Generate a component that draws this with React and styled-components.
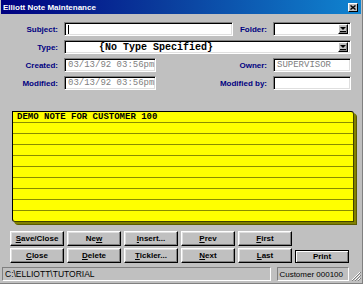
import React from 'react'
import styled, { createGlobalStyle } from 'styled-components'

const GlobalStyle = createGlobalStyle`
  html, body {
    margin: 0;
    padding: 0;
    background: #c0c0c0;
  }
  body {
    font-family: "Liberation Sans", Arial, sans-serif;
  }
`

const Window = styled.div`
  width: 363px;
  height: 284px;
  box-sizing: border-box;
  background: #c0c0c0;
  padding: 0 1px 2px 1px;
  border-right: 1px solid #808080;
  border-bottom: 1px solid #808080;
  display: flex;
  flex-direction: column;
`

const TitleBar = styled.div`
  height: 14px;
  display: flex;
  align-items: center;
  justify-content: space-between;
  padding: 0 3px 0 2px;
  background: linear-gradient(to right, #000080 0%, #0a3c9c 45%, #1084d0 100%);
  color: #fff;
  font-weight: bold;
  font-size: 8px;
`

const CloseBox = styled.div`
  width: 10px;
  height: 9px;
  box-sizing: border-box;
  background: #c0c0c0;
  border: 1px solid;
  border-color: #fff #000 #000 #fff;
  display: flex;
  align-items: center;
  justify-content: center;
`

const Body = styled.div`
  flex: 1;
  display: flex;
  flex-direction: column;
  align-items: flex-start;
  padding: 8px 9px 0 3px;
`

const Form = styled.div`
  width: 347px;
  display: grid;
  grid-template-columns: 54px 169px minmax(0, 1fr) 78px;
  grid-auto-rows: 14px;
  column-gap: 6px;
  row-gap: 4px;
`

const Label = styled.div`
  justify-self: end;
  align-self: center;
  white-space: nowrap;
  color: #000080;
  font-weight: bold;
  font-size: 8px;
`

const Field = styled.div`
  grid-column: ${(p) => p.$span || 'auto'};
  width: ${(p) => (p.$w ? `${p.$w}px` : 'auto')};
  min-width: 0;
  box-sizing: border-box;
  background: #fff;
  border: 1px solid;
  border-color: #808080 #fff #fff #808080;
  box-shadow: inset 1px 1px 0 #000, inset -1px -1px 0 #dfdfdf;
  display: flex;
  align-items: center;
  padding: 0 2px 0 3px;
  font-family: "Liberation Mono", "Courier New", monospace;
  font-size: ${(p) => (p.$big ? '10px' : '9px')};
  font-weight: ${(p) => (p.$bold ? 'bold' : 'normal')};
  color: ${(p) => (p.$disabled ? '#808080' : '#000')};
  white-space: nowrap;
  overflow: hidden;
`

const Caret = styled.span`
  width: 1px;
  height: 9px;
  background: #000;
`

const SelectText = styled.span`
  flex: 1;
  padding-left: 31px;
`

const DropButton = styled.div`
  width: 10px;
  height: 10px;
  margin-left: auto;
  box-sizing: border-box;
  background: #c0c0c0;
  border: 1px solid;
  border-color: #fff #000 #000 #fff;
  box-shadow: inset -1px -1px 0 #808080;
  display: flex;
  align-items: center;
  justify-content: center;
  flex-shrink: 0;
`

const Note = styled.div`
  margin: 21px 0 0 8px;
  width: 342px;
  height: 111px;
  box-sizing: border-box;
  border: 1px solid #000;
  border-right-color: #404000;
  border-bottom-color: #404000;
  border-radius: 0 3px 0 3px;
  box-shadow: 2px 2px 0 #808000, 3px 3px 0 #5a5a00;
  background: repeating-linear-gradient(
    to bottom,
    #ffff00 0px,
    #ffff00 10px,
    #8a8c00 10px,
    #8a8c00 11px
  );
`

const NoteLine = styled.div`
  height: 10px;
  line-height: 11px;
  padding-left: 4px;
  font-family: "Liberation Mono", "Courier New", monospace;
  font-weight: bold;
  font-size: 9px;
  color: #000;
`

const Buttons = styled.div`
  margin: 9px 0 0 6px;
  display: grid;
  grid-template-columns: repeat(6, 54px);
  grid-auto-rows: 15px;
  column-gap: 3px;
  row-gap: 2px;
`

const Button = styled.div`
  grid-column: ${(p) => p.$col || 'auto'};
  grid-row: ${(p) => p.$row || 'auto'};
  box-sizing: border-box;
  height: ${(p) => (p.$default ? '13px' : '15px')};
  align-self: end;
  background: #c0c0c0;
  border: 1px solid;
  border-color: ${(p) => (p.$default ? '#000' : '#fff #000 #000 #fff')};
  box-shadow: ${(p) =>
    p.$default
      ? 'inset 1px 1px 0 #fff, inset -1px -1px 0 #808080'
      : 'inset -1px -1px 0 #808080, inset 1px 1px 0 #dfdfdf'};
  display: flex;
  align-items: center;
  justify-content: center;
  font-weight: bold;
  font-size: 8px;
  color: #000;
  white-space: nowrap;
`

const StatusBar = styled.div`
  margin-top: 3px;
  height: 14px;
  display: flex;
  gap: 6px;
  padding-left: 1px;
  align-items: stretch;
`

const Panel = styled.div`
  width: ${(p) => p.$w}px;
  box-sizing: border-box;
  border: 1px solid;
  border-color: #808080 #fff #fff #808080;
  display: flex;
  align-items: center;
  padding-left: ${(p) => (p.$tight ? '1px' : '2px')};
  font-size: ${(p) => (p.$tight ? '8px' : '8.5px')};
  color: #000;
  white-space: nowrap;
  overflow: hidden;
`

const Grip = styled.div`
  flex: 1;
  display: flex;
  align-items: flex-end;
  justify-content: flex-end;
  margin-left: -5px;
`

function Arrow() {
  return (
    <svg width="6" height="6" viewBox="0 0 6 6">
      <path d="M0 1h6L3 4z" fill="#000" />
      <rect x="0" y="5" width="6" height="1" fill="#000" />
    </svg>
  )
}

const buttons = [
  [<><u>S</u>ave/Close</>, 1, 1],
  [<>Ne<u>w</u></>, 2, 1],
  [<><u>I</u>nsert...</>, 3, 1],
  [<><u>P</u>rev</>, 4, 1],
  [<><u>F</u>irst</>, 5, 1],
  [<><u>C</u>lose</>, 1, 2],
  [<><u>D</u>elete</>, 2, 2],
  [<><u>T</u>ickler...</>, 3, 2],
  [<><u>N</u>ext</>, 4, 2],
  [<><u>L</u>ast</>, 5, 2],
]

export default function App() {
  return (
    <>
      <GlobalStyle />
      <Window>
        <TitleBar>
          <span>Elliott Note Maintenance</span>
          <CloseBox>
            <svg width="6" height="5" viewBox="0 0 6 5">
              <path d="M0.5 0.5L5.5 4.5M5.5 0.5L0.5 4.5" stroke="#000" strokeWidth="1.4" />
            </svg>
          </CloseBox>
        </TitleBar>
        <Body>
          <Form>
            <Label>Subject:</Label>
            <Field>
              <Caret />
            </Field>
            <Label>Folder:</Label>
            <Field>
              <DropButton>
                <Arrow />
              </DropButton>
            </Field>

            <Label>Type:</Label>
            <Field $span="2 / 5" $big $bold>
              <SelectText>{'{No Type Specified}'}</SelectText>
              <DropButton>
                <Arrow />
              </DropButton>
            </Field>

            <Label>Created:</Label>
            <Field $w={92} $disabled>03/13/92 03:56pm</Field>
            <Label>Owner:</Label>
            <Field $disabled>SUPERVISOR</Field>

            <Label>Modified:</Label>
            <Field $w={92} $disabled>03/13/92 03:56pm</Field>
            <Label>Modified by:</Label>
            <Field />
          </Form>

          <Note>
            <NoteLine>DEMO NOTE FOR CUSTOMER 100</NoteLine>
          </Note>

          <Buttons>
            {buttons.map(([label, col, row], i) => (
              <Button key={i} $col={col} $row={row}>
                <span>{label}</span>
              </Button>
            ))}
            <Button $col={6} $row={2} $default>
              Print
            </Button>
          </Buttons>
        </Body>
        <StatusBar>
          <Panel $w={271}>{'C:\\ELLIOTT\\TUTORIAL'}</Panel>
          <Panel $w={72} $tight>Customer 000100</Panel>
          <Grip>
            <svg width="11" height="11" viewBox="0 0 11 11">
              <path d="M10 2L2 10M10 5L5 10M10 8L8 10" stroke="#fff" strokeWidth="1" />
              <path d="M11 2L2 11M11 5L5 11M11 8L8 11" stroke="#808080" strokeWidth="1" />
            </svg>
          </Grip>
        </StatusBar>
      </Window>
    </>
  )
}
